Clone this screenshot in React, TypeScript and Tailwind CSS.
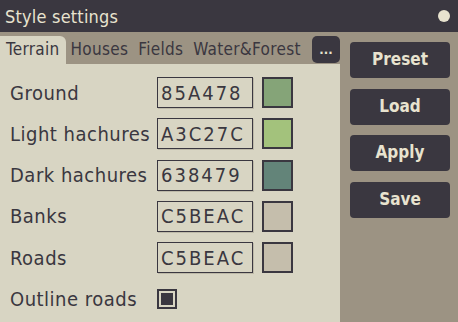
import React from "react";

const rows = [
  { label: "Ground", hex: "85A478" },
  { label: "Light hachures", hex: "A3C27C" },
  { label: "Dark hachures", hex: "638479" },
  { label: "Banks", hex: "C5BEAC" },
  { label: "Roads", hex: "C5BEAC" },
];

export default function App() {
  return (
    <div className="w-[458px] h-[322px] flex flex-col overflow-hidden font-['DejaVu_Sans_Condensed','DejaVu_Sans',sans-serif] [font-stretch:condensed] text-[#3a3740] whitespace-nowrap">
      <div className="h-8 shrink-0 bg-[#3a3740] flex items-center justify-between pl-[5px] pr-[8px]">
        <span className="text-[18px] font-medium text-[#e8e3cf] tracking-[0.2px]">Style settings</span>
        <span className="w-3 h-3 rounded-full bg-[#e8e3cf]" />
      </div>
      <div className="flex-1 flex bg-[#9c9383]">
        <div className="w-[340px] flex flex-col">
          <div className="h-8 pt-1 flex items-stretch">
            <div className="bg-[#d8d5c3] rounded-tr-[6px] px-[6px] flex items-center text-[17px] tracking-[0.3px]">Terrain</div>
            <div className="px-[5px] flex items-center text-[17px] tracking-[0.3px]">Houses</div>
            <div className="px-[5px] flex items-center text-[17px] tracking-[0.3px]">Fields</div>
            <div className="px-[5px] flex items-center text-[17px] tracking-[0.3px]">Water&amp;Forest</div>
            <div className="ml-auto shrink-0 mb-[1px] w-7 bg-[#3a3740] rounded-[5px] flex items-center justify-center text-[#e8e3cf] text-[13px] font-bold">...</div>
          </div>
          <div className="flex-1 bg-[#d8d5c3] pt-[13px] pl-[10px] flex flex-col gap-[10.25px]">
            {rows.map((r) => (
              <div key={r.label} className="h-[31px] flex items-center">
                <span className="w-[147px] text-[20px] tracking-[0.5px]">{r.label}</span>
                <div className="w-[96px] h-[31px] border border-[#3a3740] shadow-[1px_1px_0_#bdb9a8] flex items-center pl-[3px] text-[20px] tracking-[2px]">{r.hex}</div>
                <div className="ml-[9px] w-[31px] h-[31px] border-2 border-[#3a3740]" style={{ backgroundColor: "#" + r.hex }} />
              </div>
            ))}
            <div className="h-[31px] flex items-center">
              <span className="w-[147px] text-[20px] tracking-[0.5px]">Outline roads</span>
              <div className="w-5 h-5 border-2 border-[#3a3740] p-[2px]">
                <div className="w-full h-full bg-[#3a3740]" />
              </div>
            </div>
          </div>
        </div>
        <div className="flex-1 flex flex-col pt-[10px] pl-[10px] gap-[10.5px]">
          {["Preset", "Load", "Apply", "Save"].map((b) => (
            <div key={b} className="w-[100px] h-9 bg-[#3a3740] rounded-[4px] flex items-center justify-center text-[#e8e3cf] text-[17px] font-bold">{b}</div>
          ))}
        </div>
      </div>
    </div>
  );
}
